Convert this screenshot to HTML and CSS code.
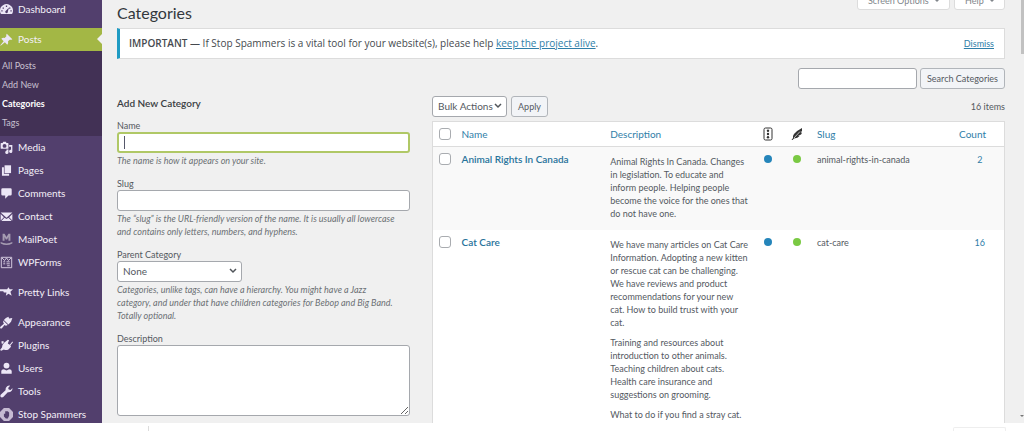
FILE: index.html
```html
<!DOCTYPE html>
<html lang="en">
<head>
<meta charset="utf-8">
<meta name="viewport" content="width=device-width, initial-scale=1">
<title>Categories</title>
<link rel="stylesheet" href="styles.css">
</head>
<body>
<div class="window">
  <div class="viewport">
    <nav class="sidebar" aria-label="Main menu">
      <a class="item first" href="#"><svg class="icon" viewBox="0 0 20 20"><path fill-rule="evenodd" d="M1 16a10 10 0 1 1 18 0q-1 1-2 1H3q-1 0-2-1zM9 4v2h2V4zM4 7v2h2V7zm10 0v2h2V7zM2 11v2h2v-2zm14 0v2h2v-2zm-7 1a2 2 0 1 0 3 1l2-6z"/></svg>Dashboard</a>
      <a class="item current" href="#"><svg class="icon" viewBox="0 0 20 20"><path d="M10.400 1L19 9.600q-2 1.500-4 .6l-2.600 2.600q.8 3.200-1.200 5.200L7.500 14.400 1 19.500.5 19l5.100-6.500L2 8.800q2-2 5.200-1.200L9.800 5q-.9-2 .6-4z"/></svg>Posts</a>
      <div class="submenu">
        <a href="#">All Posts</a>
        <a href="#">Add New</a>
        <a class="active" href="#">Categories</a>
        <a href="#">Tags</a>
      </div>
      <a class="item" href="#"><svg class="icon" viewBox="0 0 20 20"><path fill-rule="evenodd" d="M2 3h2l1-2h4l1 2h2q1 0 1 1v7q0 1-1 1H2q-1 0-1-1V4q0-1 1-1zm5 1.500a3 3 0 1 0 0 6 3 3 0 0 0 0-6z"/><path d="M14 6h5v10a2.500 2.500 0 1 1-2-2.500V9h-3zM10 13h3v4a2.500 2.500 0 1 1-3-2z"/></svg>Media</a>
      <a class="item" href="#"><svg class="icon" viewBox="0 0 20 20"><path d="M7 2h10v12H7z"/><path d="M6 5H3v13h11v-3H6z"/></svg>Pages</a>
      <a class="item" href="#"><svg class="icon" viewBox="0 0 20 20"><path d="M4 2h12q2 0 2 2v7q0 2-2 2h-3l-5 5v-5H4q-2 0-2-2V4q0-2 2-2z"/></svg>Comments</a>
      <a class="item" href="#"><svg class="icon" viewBox="0 0 20 20"><path d="M1 4h18l-9 8zM1 6l5 5-5 5zm18 0v10l-5-5zM7 12l3 2 3-2 5 5H2z"/></svg>Contact</a>
      <a class="item" href="#"><svg class="icon muted" viewBox="0 0 20 20"><path d="M4 12V1h3l3 5 3-5h3v11h-3V6l-2 4H9L7 6v6zM1 14q9 4 18 0v2q-9 5-18 0z"/></svg>MailPoet</a>
      <a class="item" href="#"><svg class="icon line" viewBox="0 0 20 20"><path d="M2 2h16v16H2zM3 3l4 4 3-4 3 4 4-4M5 9h3M10 9h5M5 12h3M10 12h5M11 15h4"/></svg>WPForms</a>
      <a class="item group" href="#"><svg class="icon" viewBox="0 0 20 20"><path d="M0 5h11l2-3 2 3h5l-4 4 2 6-5-3-4 3 1-5H6L5 8H0z"/></svg>Pretty Links</a>
      <a class="item group" href="#"><svg class="icon" viewBox="0 0 20 20"><path d="M9 3l4-2 1 3 5-1-2 6-4 4-7-7zM5 7l7 7-3 1-2-1-4 5q-2 1-3-1 0-1 1-2l5-4-1-2z"/></svg>Appearance</a>
      <a class="item" href="#"><svg class="icon" viewBox="0 0 20 20"><path d="M12 1l2 1-2 5 3 2 4-5 1 1-4 5 1 2-4 4q-4 2-7 0l-4 2-2-1 3-4Q3 9 6 6zM2 4l3-1 1 2-3 3z"/></svg>Plugins</a>
      <a class="item" href="#"><svg class="icon" viewBox="0 0 20 20"><circle cx="10" cy="5.500" r="4.500"/><path d="M2 18v-4q0-3 4-3l4 2 4-2q4 0 4 3v4z"/></svg>Users</a>
      <a class="item" href="#"><svg class="icon" viewBox="0 0 20 20"><path d="M18 9q-2 3-6 2l-7 7.500q-2 1.500-4 0-1-2 0-3.500L8.500 8Q8 4 11 2q2-1.500 4.500-1L12.500 4.500 13.500 7l3 .5L19 4.500Q19.500 7 18 9z"/></svg>Tools</a>
      <a class="item" href="#"><svg class="icon soft" viewBox="0 0 20 20"><path fill-rule="evenodd" d="M6 0h8l6 6v8l-6 6H6l-6-6V6zM8 5v4L6 9v4l3 3h3l2-4V7l-2-2z"/></svg>Stop Spammers</a>
    </nav>

    <main class="content">
      <div class="screen-tabs">
        <button type="button">Screen Options <span class="caret"></span></button>
        <button type="button">Help <span class="caret"></span></button>
      </div>
      <h1>Categories</h1>
      <div class="notice">
        <p><strong>IMPORTANT</strong> — If Stop Spammers is a vital tool for your website(s), please help <a href="#">keep the project alive</a>.</p>
        <a class="dismiss" href="#">Dismiss</a>
      </div>
      <form class="search">
        <input type="search" aria-label="Search Categories">
        <button class="button" type="button">Search Categories</button>
      </form>

      <div class="columns">
        <form class="add-form">
          <h2>Add New Category</h2>
          <div class="field">
            <label for="name">Name</label>
            <input class="focused" id="name" type="text">
            <p>The name is how it appears on your site.</p>
          </div>
          <div class="field">
            <label for="slug">Slug</label>
            <input id="slug" type="text">
            <p>The “slug” is the URL-friendly version of the name. It is usually all lowercase and contains only letters, numbers, and hyphens.</p>
          </div>
          <div class="field">
            <label for="parent">Parent Category</label>
            <span class="select parent"><select id="parent"><option>None</option></select><svg viewBox="0 0 8 6"><path d="M1 1l3 3 3-3"/></svg></span>
            <p>Categories, unlike tags, can have a hierarchy. You might have a Jazz category, and under that have children categories for Bebop and Big Band. Totally optional.</p>
          </div>
          <div class="field">
            <label for="description">Description</label>
            <textarea id="description"></textarea>
          </div>
        </form>

        <section class="list">
          <div class="toolbar">
            <span class="select"><select aria-label="Bulk action"><option>Bulk Actions</option></select><svg viewBox="0 0 8 6"><path d="M1 1l3 3 3-3"/></svg></span>
            <button class="button" type="button">Apply</button>
            <span class="total">16 items</span>
          </div>
          <table>
            <colgroup><col class="c-check"><col class="c-name"><col class="c-desc"><col class="c-icon"><col class="c-icon"><col class="c-slug"><col class="c-count"></colgroup>
            <thead>
              <tr>
                <th class="check"><input type="checkbox" aria-label="Select all"></th>
                <th><a href="#">Name</a></th>
                <th><a href="#">Description</a></th>
                <th class="mark"><svg class="score" viewBox="0 0 10 14"><rect x="1" y="1" width="8" height="12" rx="1.500"/><circle cx="5" cy="3.800" r="1.200"/><circle cx="5" cy="7" r="1.200"/><circle cx="5" cy="10.200" r="1.200"/></svg></th>
                <th class="mark"><svg class="feather" viewBox="0 0 12 14"><path d="M11 1Q6 3.500 3 7 1.500 9 2 11L.5 13l1 0 1.500-1.500Q7 11 8.500 9L7 9l3-1.500q1-1 .8-2L9.500 5.500 11 4z"/><path class="vein" d="M3 11L9 4.500"/></svg></th>
                <th><a href="#">Slug</a></th>
                <th class="count"><a href="#">Count</a></th>
              </tr>
            </thead>
            <tbody>
              <tr>
                <td class="check"><input type="checkbox" aria-label="Select Animal Rights In Canada"></td>
                <td class="title"><a href="#">Animal Rights In Canada</a></td>
                <td class="text"><p>Animal Rights In Canada. Changes in legislation. To educate and inform people. Helping people become the voice for the ones that do not have one.</p></td>
                <td class="mark"><span class="dot blue"></span></td>
                <td class="mark"><span class="dot green"></span></td>
                <td class="slug">animal-rights-in-canada</td>
                <td class="number"><a href="#">2</a></td>
              </tr>
              <tr>
                <td class="check"><input type="checkbox" aria-label="Select Cat Care"></td>
                <td class="title"><a href="#">Cat Care</a></td>
                <td class="text"><p>We have many articles on Cat Care Information. Adopting a new kitten or rescue cat can be challenging. We have reviews and product recommendations for your new cat. How to build trust with your cat.</p><p>Training and resources about introduction to other animals. Teaching children about cats. Health care insurance and suggestions on grooming.</p><p>What to do if you find a stray cat.</p></td>
                <td class="mark"><span class="dot blue"></span></td>
                <td class="mark"><span class="dot green"></span></td>
                <td class="slug">cat-care</td>
                <td class="number"><a href="#">16</a></td>
              </tr>
            </tbody>
          </table>
        </section>
      </div>
    </main>
    <div class="scrollbar"><span class="thumb"></span><span class="down"></span></div>
  </div>
  <footer class="shelf"><span class="divider"></span><span class="show-all"></span></footer>
</div>
</body>
</html>
```
FILE: styles.css
```css
* { box-sizing: border-box; }
body {
  margin: 0;
  background: #fff;
  color: #54595f;
  font: 9px/13px "Segoe UI", Lato, "Open Sans", sans-serif;
}
h1, h2, p { margin: 0; }
a { color: #2f7ea8; text-decoration: none; }
input, select, textarea, button { font: inherit; color: inherit; margin: 0; }

.window { display: flex; flex-direction: column; height: 100vh; overflow: hidden; }
.viewport { display: flex; flex: 1; min-height: 0; overflow: hidden; background: #f0f0f0; }

/* Sidebar */
.sidebar { flex: none; width: 102px; background: #523f6d; font-size: 10px; }
.item { display: flex; align-items: center; gap: 5px; height: 23px; color: #f4f0f8; white-space: nowrap; }
.first { margin: -2px 0 7px; }
.group { margin-top: 7px; }
.icon { flex: none; width: 13px; height: 13px; fill: #ece6f6; }
.muted { fill: #a59bb1; }
.soft { fill: #c5bad2; }
.line { fill: none; stroke: #d5cbe0; stroke-width: 1.5; }
.current { position: relative; background: #a3b745; }
.current::after {
  content: "";
  position: absolute;
  right: 0;
  top: 6px;
  border: 5px solid transparent;
  border-left: 0;
  border-right-color: #f0f0f0;
}
.submenu { padding: 5px 0 4px 2px; background: #423155; font-size: 9px; }
.submenu a { display: block; line-height: 19px; color: #c9c1d1; }
.submenu .active { color: #fff; font-weight: 700; }

/* Page */
.content { flex: 1; min-width: 0; padding: 0 15px; position: relative; }
.screen-tabs { position: absolute; top: -9px; right: 15px; display: flex; gap: 4px; }
.screen-tabs button {
  height: 19px;
  padding: 0 10px;
  border: 1px solid #dcdcdc;
  border-radius: 0 0 3px 3px;
  background: #fff;
  color: #81868b;
  font-size: 9px;
  line-height: 15px;
}
.caret { display: inline-block; margin-left: 4px; vertical-align: 2px; border: 2px solid transparent; border-top-color: #81868b; border-bottom: 0; }
h1 { padding-top: 3px; color: #33383d; font-size: 16px; font-weight: 400; line-height: 20px; }
.notice {
  display: flex;
  align-items: center;
  justify-content: space-between;
  height: 31px;
  margin-top: 5px;
  padding: 0 10px 0 9px;
  border: 1px solid #dcdcdc;
  border-left: 3px solid #1f9bc3;
  background: #fff;
  color: #45494e;
  font-family: "Segoe UI", "Open Sans", sans-serif;
  font-size: 10px;
}
.notice strong { font-weight: 600; }
.notice a { text-decoration: underline; }
.notice .dismiss { font-family: "Segoe UI", Lato, sans-serif; font-size: 9px; }
.search { display: flex; justify-content: flex-end; gap: 3px; margin-top: 9px; }
.search input { width: 119px; }
input[type="text"], input[type="search"], textarea, select {
  height: 21px;
  padding: 0 5px;
  border: 1px solid #a5a8ad;
  border-radius: 3px;
  background-color: #fff;
  outline: 0;
  appearance: none;
}
.button { height: 21px; padding: 0 6px; border: 1px solid #b1b5ba; border-radius: 3px; background: #f2f4f7; white-space: nowrap; }

.columns { display: flex; gap: 22px; margin-top: 7px; }
.add-form { flex: 0 0 33%; }
h2 { padding-top: 1px; margin-bottom: 9px; color: #3a3e43; font-size: 10px; font-weight: 600; line-height: 13px; }
.field { margin-bottom: 10px; }
.field label { display: block; }
.field input, .field textarea { display: block; width: 100%; }
.field textarea { height: 71px; resize: vertical; }
.field .focused {
  border: 2px solid #b0c866;
  background: #fff linear-gradient(#55576a, #55576a) 5px center / 1px 13px no-repeat;
}
.field p { max-width: 96%; margin-top: 1px; color: #6c7075; font-style: italic; }

.select { position: relative; display: inline-block; vertical-align: top; height: 21px; }
.select select { width: 100%; padding-right: 12px; font-size: 10px; }
.select svg { position: absolute; right: 5px; top: 7px; width: 8px; height: 6px; fill: none; stroke: #50555a; stroke-width: 1.5; pointer-events: none; }
.parent { display: block; width: 125px; }

/* Category list */
.list { flex: 1; min-width: 0; }
.toolbar { display: flex; gap: 4px; align-items: center; margin-bottom: 4px; }
.toolbar .total { margin-left: auto; }
table { width: 100%; table-layout: fixed; border-collapse: collapse; border: 1px solid #dcdcdc; background: #fff; }
.c-check { width: 24px; }
.c-name { width: 26%; }
.c-desc { width: 26%; }
.c-icon { width: 29px; }
.c-count { width: 54px; }
th { height: 25px; padding: 0 5px; border-bottom: 1px solid #dcdcdc; font-size: 10px; font-weight: 400; text-align: left; }
td { padding: 6px 5px; vertical-align: top; }
tbody tr:nth-child(odd) { background: #f9f9f9; }
.check { padding-right: 0; padding-left: 6px; line-height: 0; }
.check input { appearance: none; width: 12px; height: 12px; border: 1px solid #a9acb0; border-radius: 3px; background: #fff; }
.title { font-size: 10px; font-weight: 600; }
.title a { color: #28739b; }
.text { padding-top: 8px; padding-bottom: 3px; }
.text p { margin-bottom: 7px; }
.mark { padding-right: 0; padding-left: 0; text-align: center; line-height: 0; }
.score, .feather { display: block; width: 10px; height: 14px; margin: 0 auto; }
.score { fill: #333; }
.score rect { fill: none; stroke: #333; }
.feather { width: 12px; fill: #333; }
.vein { fill: none; stroke: #bbb; stroke-width: 1; }
.dot { display: inline-block; width: 8px; height: 8px; margin-top: 2px; border-radius: 50%; }
.blue { background: #2585ba; }
.green { background: #7ac943; }
.count { padding-right: 18px; text-align: right; }
.number { padding-right: 0; text-align: center; }

/* Browser frame */
.scrollbar { display: flex; flex-direction: column; justify-content: space-between; align-items: flex-end; flex: none; width: 4px; }
.thumb { width: 3px; height: 54px; background: #c1c1c1; }
.down { margin-bottom: 6px; border: 2px solid transparent; border-top-color: #777; border-bottom: 0; }
.shelf { display: flex; flex: none; justify-content: space-between; align-items: flex-end; height: 8px; padding: 0 18px 0 148px; background: #fff; }
.divider { width: 1px; height: 5px; background: #dcdcdc; }
.show-all { width: 53px; height: 4px; border: 1px solid #eee; border-bottom: 0; border-radius: 2px 2px 0 0; }
```
